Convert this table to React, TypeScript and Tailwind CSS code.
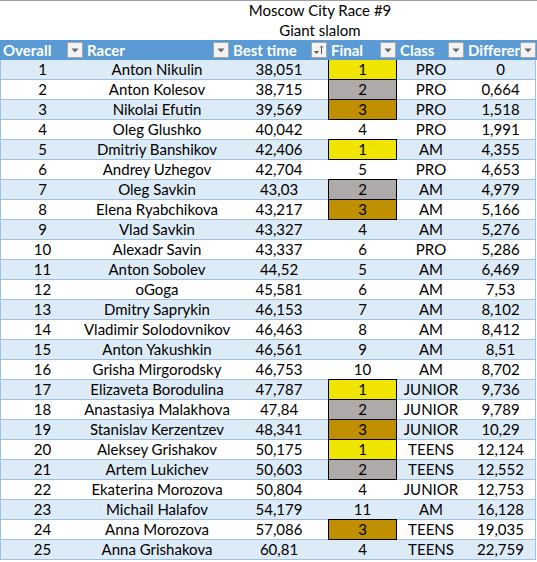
import React from "react";

// ============================================
// RACE RESULTS SHEET
// ============================================
type Row = [number, string, string, string, string, string];

const rows: Row[] = [
  [1, "Anton Nikulin", "38,051", "1", "PRO", "0"],
  [2, "Anton Kolesov", "38,715", "2", "PRO", "0,664"],
  [3, "Nikolai Efutin", "39,569", "3", "PRO", "1,518"],
  [4, "Oleg Glushko", "40,042", "4", "PRO", "1,991"],
  [5, "Dmitriy Banshikov", "42,406", "1", "AM", "4,355"],
  [6, "Andrey Uzhegov", "42,704", "5", "PRO", "4,653"],
  [7, "Oleg Savkin", "43,03", "2", "AM", "4,979"],
  [8, "Elena Ryabchikova", "43,217", "3", "AM", "5,166"],
  [9, "Vlad Savkin", "43,327", "4", "AM", "5,276"],
  [10, "Alexadr Savin", "43,337", "6", "PRO", "5,286"],
  [11, "Anton Sobolev", "44,52", "5", "AM", "6,469"],
  [12, "oGoga", "45,581", "6", "AM", "7,53"],
  [13, "Dmitry Saprykin", "46,153", "7", "AM", "8,102"],
  [14, "Vladimir Solodovnikov", "46,463", "8", "AM", "8,412"],
  [15, "Anton Yakushkin", "46,561", "9", "AM", "8,51"],
  [16, "Grisha Mirgorodsky", "46,753", "10", "AM", "8,702"],
  [17, "Elizaveta Borodulina", "47,787", "1", "JUNIOR", "9,736"],
  [18, "Anastasiya Malakhova", "47,84", "2", "JUNIOR", "9,789"],
  [19, "Stanislav Kerzentzev", "48,341", "3", "JUNIOR", "10,29"],
  [20, "Aleksey Grishakov", "50,175", "1", "TEENS", "12,124"],
  [21, "Artem Lukichev", "50,603", "2", "TEENS", "12,552"],
  [22, "Ekaterina Morozova", "50,804", "4", "JUNIOR", "12,753"],
  [23, "Michail Halafov", "54,179", "11", "AM", "16,128"],
  [24, "Anna Morozova", "57,086", "3", "TEENS", "19,035"],
  [25, "Anna Grishakova", "60,81", "4", "TEENS", "22,759"],
];

// medal colour only for the top three
const medal: Record<string, string> = {
  "1": "bg-[#efe500]",
  "2": "bg-[#aeaaaa]",
  "3": "bg-[#bf8f00]",
};

function FilterButton({ sort }: { sort?: boolean }) {
  return (
    <div className="w-4 h-4 shrink-0 bg-[#f3f3f3] border border-[#a6a6a6] flex items-center justify-center">
      {sort ? (
        <svg width="12" height="12" viewBox="0 0 12 12">
          <path d="M1 7h5l-2.5 3z" fill="#555" />
          <path d="M8.5 10V2M7 3.5l1.5-1.5 1.5 1.5" stroke="#555" strokeWidth="1" fill="none" />
        </svg>
      ) : (
        <svg width="10" height="10" viewBox="0 0 10 10">
          <path d="M1.5 3.5h7l-3.5 4z" fill="#666" />
        </svg>
      )}
    </div>
  );
}

function HeaderCell({ label, sort }: { label: string; sort?: boolean }) {
  return (
    <div className="flex items-center h-5 pl-[3px] pr-px">
      <span className="flex-1 min-w-0 overflow-hidden whitespace-nowrap font-bold text-white">
        {label}
      </span>
      <FilterButton sort={sort} />
    </div>
  );
}

export default function App() {
  return (
    <div
      className="w-[537px] h-[562px] bg-white overflow-hidden text-[15px] leading-[19px] text-black"
      style={{ fontFamily: "Lato, 'Open Sans', sans-serif" }}
    >
      {/* Title */}
      <div className="h-5 border-t border-[#a0a0a0] flex">
        <div className="ml-[230px] w-[180px] text-center">Moscow City Race #9</div>
      </div>
      <div className="h-5 flex">
        <div className="ml-[230px] w-[180px] text-center pt-px">Giant slalom</div>
      </div>

      {/* Header */}
      <div className="grid grid-cols-[84px_146px_98px_69px_68px_72px] bg-[#5b9bd5]">
        <HeaderCell label="Overall" />
        <HeaderCell label="Racer" />
        <HeaderCell label="Best time" sort />
        <HeaderCell label="Final" />
        <HeaderCell label="Class" />
        <HeaderCell label="Differen" />
      </div>

      {/* Rows */}
      <div className="w-[536px] border-l border-r border-[#9bc2e6]">
        {rows.map((r, i) => {
          const colored = medal[r[3]] || "";
          const nextColored = i + 1 < rows.length && !!medal[rows[i + 1][3]];
          const cell = "h-5 border-b border-[#9bc2e6] text-center whitespace-nowrap";
          return (
            <div
              key={r[0]}
              className={`grid grid-cols-[83px_146px_98px_69px_68px_71px] ${i % 2 === 0 ? "bg-[#ddebf7]" : "bg-white"}`}
            >
              <div className={cell}>{r[0]}</div>
              <div className={cell}>{r[1]}</div>
              <div className={cell}>{r[2]}</div>
              <div
                className={`h-5 border-b text-center ${
                  colored ? `${colored} border-l border-r border-black` : ""
                } ${colored || nextColored ? "border-b-black" : "border-b-[#9bc2e6]"}`}
              >
                {r[3]}
              </div>
              <div className={cell}>{r[4]}</div>
              <div className={cell}>{r[5]}</div>
            </div>
          );
        })}
      </div>
    </div>
  );
}
